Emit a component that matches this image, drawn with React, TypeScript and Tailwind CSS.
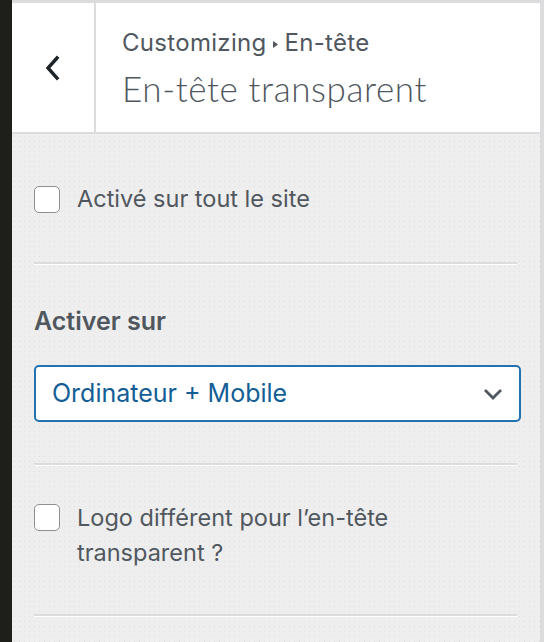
import { useState } from 'react'

function Checkbox({ checked, onChange }: { checked: boolean; onChange: () => void }) {
  return (
    <button
      onClick={onChange}
      className="h-[27px] w-[26px] shrink-0 rounded-[5px] border-[1.5px] border-[#8c8f94] bg-white"
      aria-pressed={checked}
    />
  )
}

function Separator() {
  return <div className="h-[3px] border-t-2 border-[#dcdcde] border-b border-b-white" />
}

export default function App() {
  const [all, setAll] = useState(false)
  const [logo, setLogo] = useState(false)

  return (
    <div
      className="flex h-[642px] w-[544px] overflow-hidden bg-[#eee]"
      style={{ fontFamily: 'Inter, "Noto Sans", sans-serif' }}
    >
      {/* left dark edge */}
      <div className="w-3 shrink-0 bg-[#1e1e1b]" />

      <div className="flex flex-1 flex-col border-r-4 border-[#dcdcde]">
        {/* Header */}
        <div className="flex h-[134px] shrink-0 border-t-[3px] border-b-2 border-[#dcdcde] bg-white">
          <button className="flex w-[84px] shrink-0 items-center justify-center border-r-2 border-[#dcdcde] bg-white">
            <svg width="20" height="26" viewBox="0 0 20 26" fill="none">
              <path d="M14 3 L5 13 L14 23" stroke="#1d2327" strokeWidth="3.4" strokeLinecap="square" />
            </svg>
          </button>
          <div className="pl-[26px] pt-[26px]">
            <div className="flex items-center whitespace-nowrap text-[24px] leading-[28px] tracking-[0.3px] text-[#50575e]">
              <span>Customizing</span>
              <svg className="ml-[6px] mr-[7px] mt-[2px] shrink-0" width="5" height="7" viewBox="0 0 5 7">
                <path d="M0 0 L5 3.5 L0 7 Z" fill="#50575e" />
              </svg>
              <span>En-tête</span>
            </div>
            <h1
              className="mt-[11px] whitespace-nowrap text-[35px] leading-[40px] tracking-[0.6px] text-[#50575e]"
              style={{ fontFamily: 'Lato, Inter, sans-serif', fontWeight: 300 }}
            >
              En-tête transparent
            </h1>
          </div>
        </div>

        {/* Panel */}
        <div className="flex-1 bg-[radial-gradient(#e0e0e0_0.8px,transparent_0.8px)] bg-[length:5px_5px] pl-[22px] pr-[19px]">
          <div className="flex items-center gap-[17px] pt-[50px] pb-[48px]">
            <Checkbox checked={all} onChange={() => setAll(!all)} />
            <span className="text-[23.5px] leading-[30px] text-[#50575e]">Activé sur tout le site</span>
          </div>

          <div className="mr-[4px]">
            <Separator />
          </div>

          <div className="pt-[40px] pb-[41px]">
            <div className="text-[25px] font-semibold leading-[32px] text-[#50575e]">Activer sur</div>
            <div className="mt-[28px] flex h-[57px] items-center justify-between rounded-[5px] border-2 border-[#2271b1] bg-white pl-[16px] pr-[15px]">
              <span className="text-[25px] text-[#135e96]">Ordinateur + Mobile</span>
              <svg width="22" height="14" viewBox="0 0 22 14" fill="none">
                <path d="M3 3 L11 11 L19 3" stroke="#50575e" strokeWidth="2.8" />
              </svg>
            </div>
          </div>

          <div className="mr-[4px]">
            <Separator />
          </div>

          <div className="flex items-start gap-[17px] pt-[38px] pb-[44px]">
            <Checkbox checked={logo} onChange={() => setLogo(!logo)} />
            <span className="-mt-[4px] text-[23.5px] leading-[35px] text-[#50575e]">
              Logo différent pour l’en-tête
              <br />
              transparent ?
            </span>
          </div>

          <div className="mr-[4px]">
            <Separator />
          </div>
        </div>
      </div>
    </div>
  )
}
